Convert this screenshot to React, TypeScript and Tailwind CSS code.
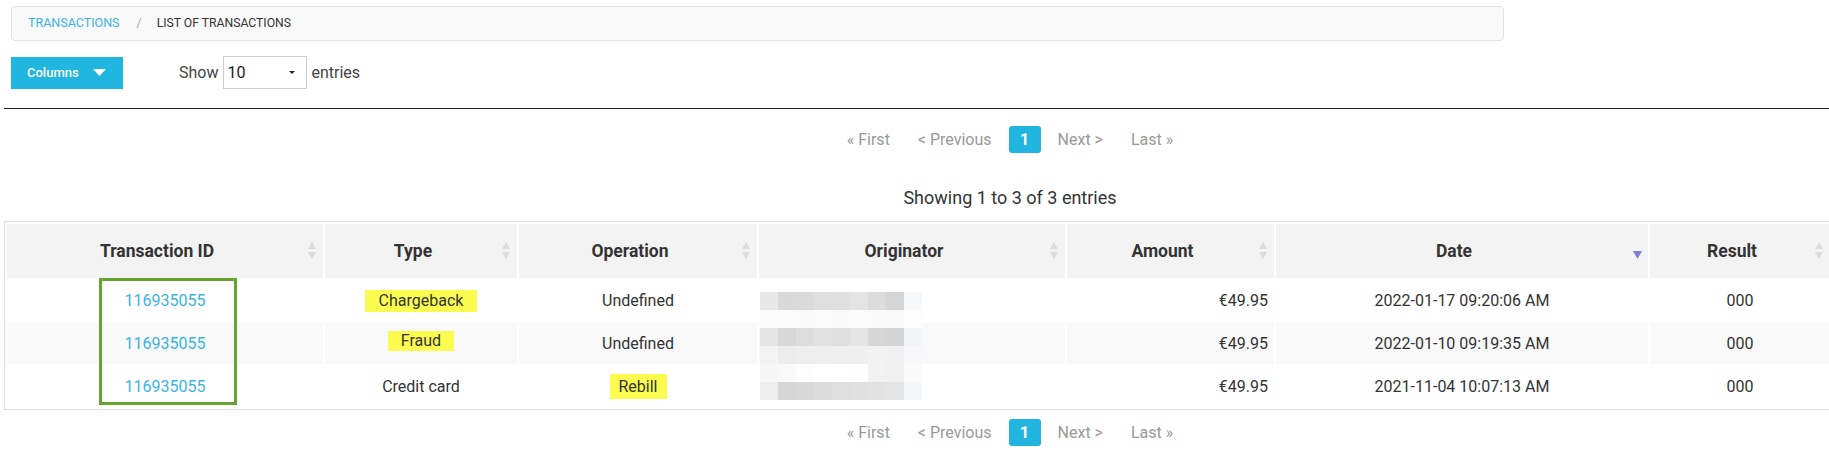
import type { ReactNode } from "react";

type Col = { label: string; width: number; sort: "both" | "desc" };

const columns: Col[] = [
  { label: "Transaction ID", width: 316, sort: "both" },
  { label: "Type", width: 192, sort: "both" },
  { label: "Operation", width: 238, sort: "both" },
  { label: "Originator", width: 306, sort: "both" },
  { label: "Amount", width: 207, sort: "both" },
  { label: "Date", width: 372, sort: "desc" },
  { label: "Result", width: 180, sort: "both" },
];

const colWidth = [
  "w-[316px]",
  "w-[192px]",
  "w-[238px]",
  "w-[306px]",
  "w-[207px]",
  "w-[372px]",
  "w-[180px]",
];

type Row = {
  id: string;
  type: ReactNode;
  operation: ReactNode;
  amount: string;
  date: string;
  result: string;
};

const rows: Row[] = [
  {
    id: "116935055",
    type: <Highlight className="h-[22px] px-[14px] leading-[22px]">Chargeback</Highlight>,
    operation: "Undefined",
    amount: "€49.95",
    date: "2022-01-17 09:20:06 AM",
    result: "000",
  },
  {
    id: "116935055",
    type: (
      <Highlight className="h-[20px] px-[13px] leading-[20px] -translate-y-[3px]">Fraud</Highlight>
    ),
    operation: "Undefined",
    amount: "€49.95",
    date: "2022-01-10 09:19:35 AM",
    result: "000",
  },
  {
    id: "116935055",
    type: "Credit card",
    operation: <Highlight className="h-[25px] px-[9px] leading-[25px]">Rebill</Highlight>,
    amount: "€49.95",
    date: "2021-11-04 10:07:13 AM",
    result: "000",
  },
];

// pixelated blur over the originator column, 6 bands x 9 squares
const mosaic: string[][] = [
  ["bg-[#e8e8e8]", "bg-[#d9d9d9]", "bg-[#dadada]", "bg-[#dedede]", "bg-[#e0e0e0]", "bg-[#e4e4e4]", "bg-[#dcdcdc]", "bg-[#d6d6d6]", "bg-[#f7f8fa]"],
  ["bg-[#fbfbfb]", "bg-[#fbfbfb]", "bg-[#fafafa]", "bg-[#fbfbfb]", "bg-[#fafafa]", "bg-[#fbfbfb]", "bg-[#fafafa]", "bg-[#fafafa]", "bg-[#fdfdfd]"],
  ["bg-[#e4e4e4]", "bg-[#d8d8d8]", "bg-[#dddddd]", "bg-[#e2e2e2]", "bg-[#dfdfdf]", "bg-[#e4e4e4]", "bg-[#d6d6d6]", "bg-[#d4d4d4]", "bg-[#f3f5f8]"],
  ["bg-[#f3f3f3]", "bg-[#ececec]", "bg-[#eeeeee]", "bg-[#eeeeee]", "bg-[#efefef]", "bg-[#efefef]", "bg-[#f2f2f2]", "bg-[#f1f1f1]", "bg-[#f8f8fa]"],
  ["bg-[#f7f7f7]", "bg-[#f9f9f9]", "bg-[#fdfdfd]", "bg-[#ffffff]", "bg-[#ffffff]", "bg-[#fefefe]", "bg-[#f2f2f2]", "bg-[#f0f0f0]", "bg-[#fafafa]"],
  ["bg-[#ededed]", "bg-[#d6d6d6]", "bg-[#d9d9d9]", "bg-[#dcdcdc]", "bg-[#dedede]", "bg-[#e0e0e0]", "bg-[#e2e2e2]", "bg-[#e4e4e4]", "bg-[#f5f6f8]"],
];

function Highlight({ className, children }: { className: string; children: ReactNode }) {
  return <span className={`inline-block bg-[#fbfb50] ${className}`}>{children}</span>;
}

function SortIcon({ kind }: { kind: "both" | "desc" }) {
  if (kind === "desc") {
    return (
      <svg width="9" height="8" viewBox="0 0 9 8" className="absolute right-[6px] top-[27px]">
        <path d="M0 0 L9 0 L4.5 8 Z" fill="#7b80d8" />
      </svg>
    );
  }
  return (
    <svg width="8" height="17" viewBox="0 0 8 17" className="absolute right-[7px] top-[18px]">
      <path d="M0 7 L4 0 L8 7 Z" fill="#dcdcdc" />
      <path d="M0 10 L8 10 L4 17 Z" fill="#dcdcdc" />
    </svg>
  );
}

function Pagination() {
  return (
    <div className="flex items-center justify-center text-[16px] text-[#999]">
      <span className="mr-[28px]">« First</span>
      <span className="mr-[17px]">&lt; Previous</span>
      <span className="flex h-[27px] w-[32px] items-center justify-center rounded-[3px] bg-[#21b6df] font-bold text-white">
        1
      </span>
      <span className="ml-[17px]">Next &gt;</span>
      <span className="ml-[28px]">Last »</span>
    </div>
  );
}

export default function App() {
  return (
    <div className="h-[456px] w-[1829px] overflow-hidden bg-white font-['Roboto','Liberation_Sans',sans-serif] text-[#333]">
      <div className="w-[2020px]">
        {/* breadcrumb */}
        <div className="ml-[11px] mt-[6px] flex h-[35px] w-[1493px] items-center rounded-[4px] border border-[#e3e3e3] bg-[#f9f9f9] pl-[16px] text-[12.5px] uppercase">
          <span className="text-[#3ab4e1]">Transactions</span>
          <span className="ml-[17px] text-[#aaa]">/</span>
          <span className="ml-[15px] text-[12.2px] text-[#333]">List of transactions</span>
        </div>

        {/* toolbar */}
        <div className="mt-[15px] flex h-[33px] items-center">
          <button className="ml-[11px] flex h-[32px] w-[112px] items-center gap-[14px] bg-[#21b6df] pl-[16px] text-[13px] font-medium text-white">
            Columns
            <svg width="13" height="7" viewBox="0 0 13 7">
              <path d="M0 0 L13 0 L6.5 7 Z" fill="#fff" />
            </svg>
          </button>
          <span className="ml-[56px] text-[16px] text-[#444]">Show</span>
          <div className="ml-[5px] flex h-[33px] w-[84px] items-center justify-between border border-[#ccc] bg-white pl-[3px] pr-[11px] text-[16px] text-[#222]">
            10
            <svg width="6" height="3" viewBox="0 0 6 3">
              <path d="M0 0 L6 0 L3 3 Z" fill="#222" />
            </svg>
          </div>
          <span className="ml-[4px] text-[16px] text-[#444]">entries</span>
        </div>

        <div className="ml-[4px] mt-[19px] border-t border-[#222]" />

        <div className="mt-[17px]">
          <Pagination />
        </div>

        <p className="mt-[33px] text-center text-[18px] leading-[24px] text-[#333]">
          Showing 1 to 3 of 3 entries
        </p>

        <div className="relative mt-[11px]">
          <table className="ml-[4px] table-fixed border-separate border-spacing-[2px] border border-[#ddd] text-[16px]">
            <thead>
              <tr>
                {columns.map((c, i) => (
                  <th
                    key={c.label}
                    className={`relative h-[54px] bg-[#f3f3f3] pl-2 pr-6 text-center text-[17.5px] font-bold text-[#333] ${colWidth[i]}`}
                  >
                    {c.label}
                    <SortIcon kind={c.sort} />
                  </th>
                ))}
              </tr>
            </thead>
            <tbody>
              {rows.map((r, i) => (
                <tr key={r.date} className={i === 1 ? "bg-[#f9f9f9]" : "bg-white"}>
                  <td className="h-[41px] text-center text-[#3ab4e1]">{r.id}</td>
                  <td className="text-center">{r.type}</td>
                  <td className="text-center">{r.operation}</td>
                  <td />
                  <td className="pr-[6px] text-right">{r.amount}</td>
                  <td className="text-center">{r.date}</td>
                  <td className="text-center">{r.result}</td>
                </tr>
              ))}
            </tbody>
          </table>

          {/* blurred originator values */}
          <div className="absolute left-[760px] top-[71px] flex flex-col">
            {mosaic.map((band, bi) => (
              <div key={bi} className="flex">
                {band.map((cls, ci) => (
                  <div key={ci} className={`h-[18px] w-[18px] ${cls}`} />
                ))}
              </div>
            ))}
          </div>

          {/* annotation box round the transaction ids */}
          <div className="absolute left-[99px] top-[57px] h-[127px] w-[138px] border-[3px] border-[#63a52d]" />
        </div>

        <div className="mt-[9px]">
          <Pagination />
        </div>
      </div>
    </div>
  );
}
